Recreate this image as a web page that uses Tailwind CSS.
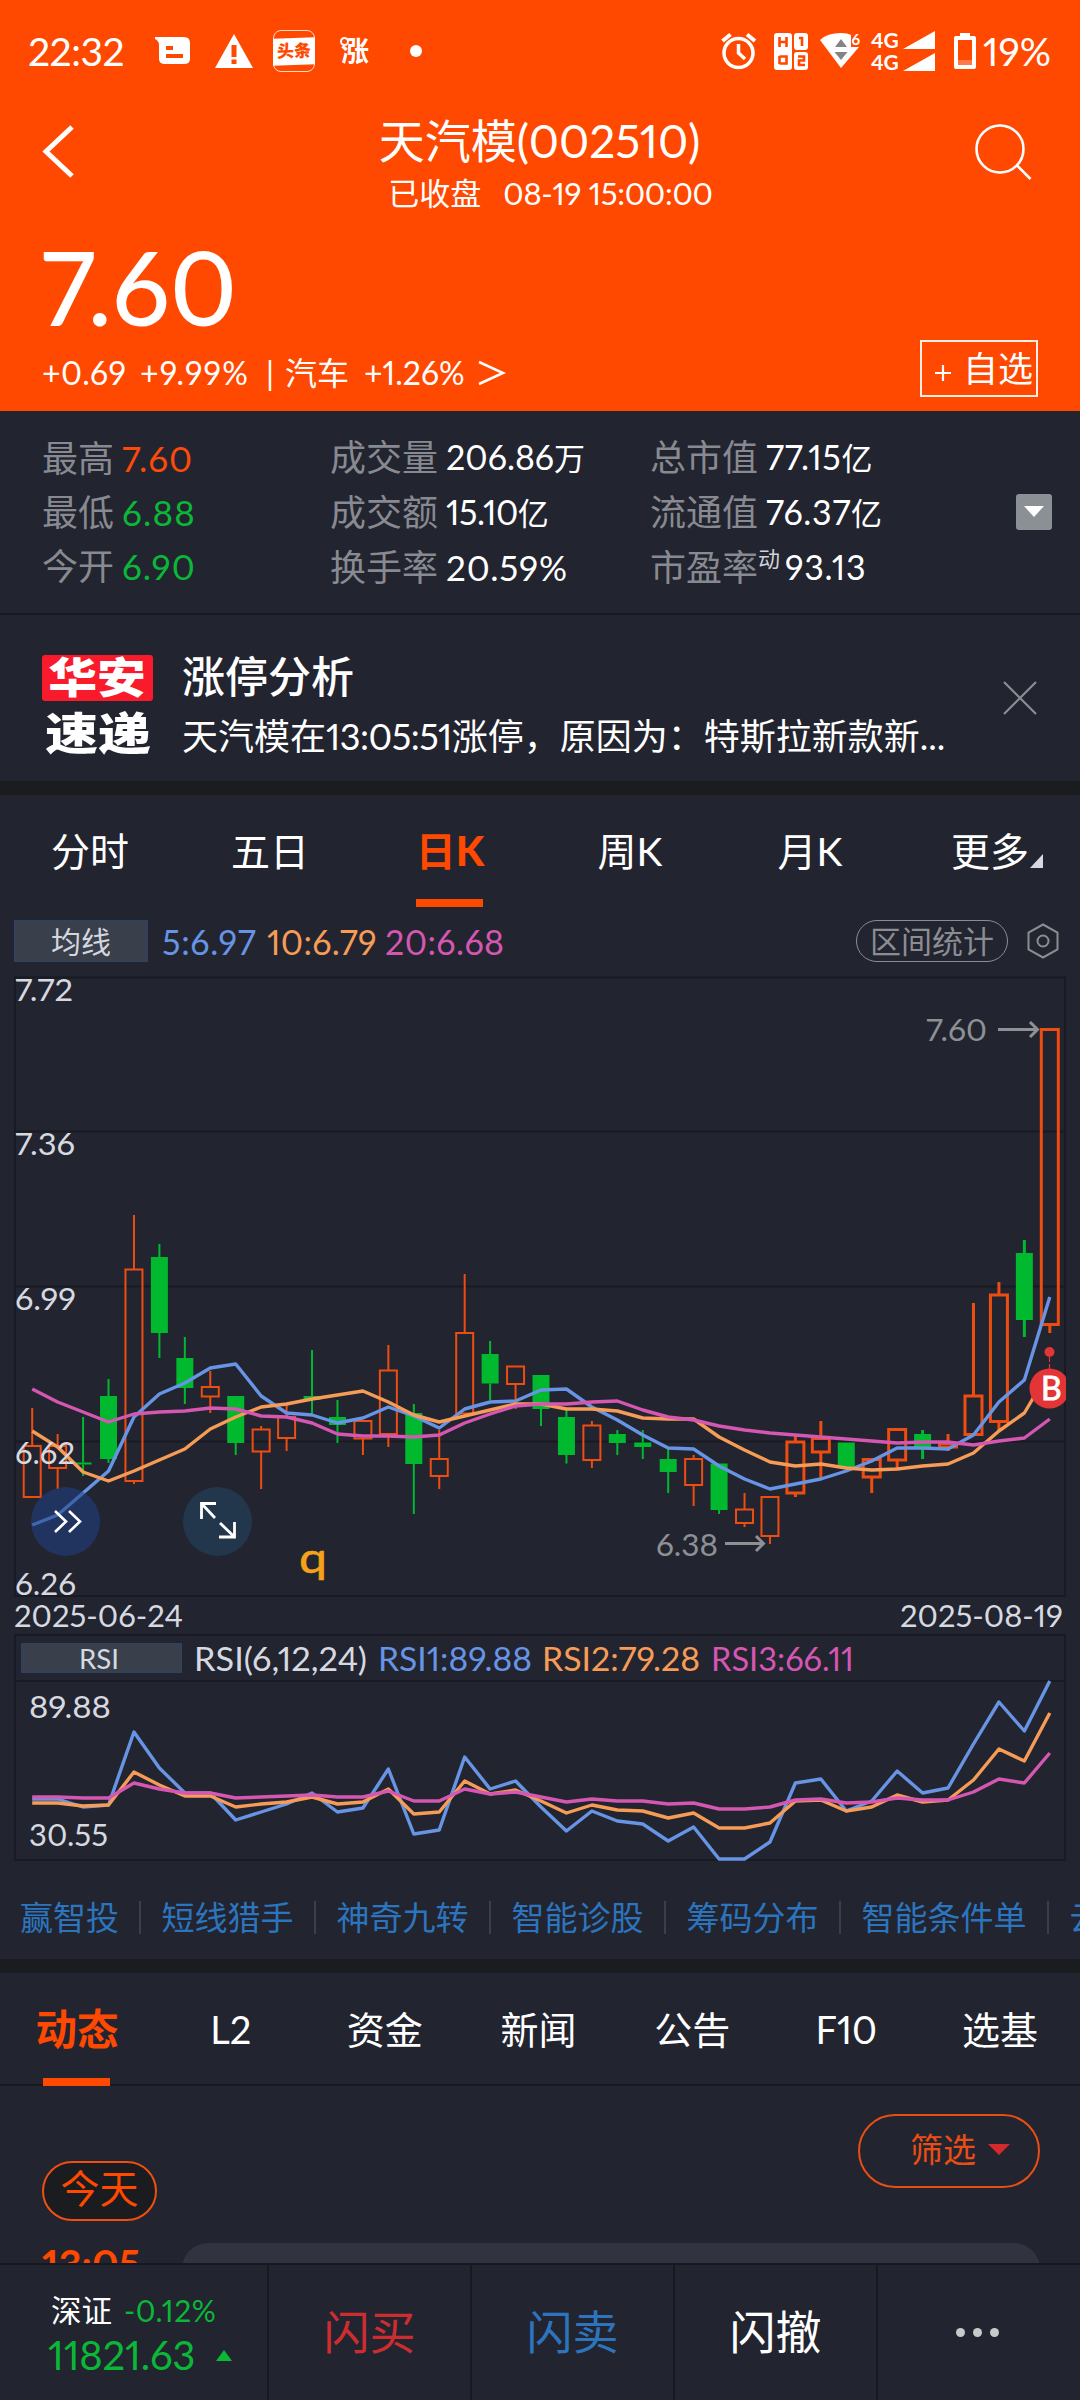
<!DOCTYPE html>
<html lang="zh-CN">

<head>
  <meta charset="UTF-8">
  <meta name="viewport" content="width=device-width, initial-scale=1.0">
  <title>天汽模(002510)</title>
  <script src="https://cdn.jsdelivr.net/npm/@tailwindcss/browser@4"></script>
</head>

<body class="w-[1080px] h-[2400px] overflow-hidden flex flex-col bg-[#22242f] text-white font-['Lato','Noto_Sans_CJK_SC',sans-serif] proportional-nums whitespace-nowrap">

  <!-- Header -->
  <header class="h-[411px] shrink-0 bg-[#ff4800] flex flex-col">
    <!-- Status bar -->
    <div class="h-[102px] shrink-0 flex items-center justify-between pl-[28px] pr-[29px]">
      <div class="flex items-center h-full">
        <span class="w-[127px] text-[39px] leading-none tracking-[-0.5px]">22:32</span>
        <svg class="w-[36px] h-[30px]" viewBox="0 0 36 30">
          <path fill="#fff" fill-rule="evenodd" d="M0 1H29Q35 1 35 7V23Q35 28 29 28H10Q4 28 4 23V8Q3 4 0 3ZM11 10V14H18V10ZM11 18V22H28V18Z" />
        </svg>
        <svg class="w-[38px] h-[34px] ml-[24px]" viewBox="0 0 38 34">
          <path fill="#fff" fill-rule="evenodd" d="M19 0 38 34H0ZM16.500 11V23H21.500V11ZM16.500 25.500V30H21.500V25.500Z" />
        </svg>
        <div class="w-[42px] h-[42px] ml-[20px] border border-white/80 rounded-lg flex items-center justify-center">
          <div class="w-[42px] h-[27px] shrink-0 bg-white text-[#ff4800] text-[17px] font-black leading-[25px] text-center -skew-y-2">头条</div>
        </div>
        <div class="relative w-[30px] h-[42px] ml-[26px] flex items-center">
          <span class="text-[28px] font-bold leading-none">涨</span>
          <span class="absolute left-[-1px] top-[7px] w-[9px] h-[9px] rounded-full bg-[#ff4800] border-2 border-white"></span>
        </div>
        <span class="w-[12px] h-[12px] ml-[39px] rounded-full bg-white"></span>
      </div>
      <div class="flex items-center h-full">
        <svg class="w-[36px] h-[38px]" viewBox="0 0 36 38" fill="none" stroke="#fff" stroke-width="3.500">
          <circle cx="17.500" cy="21" r="14.500" />
          <path d="M17.500 12V21L24 27" />
          <path d="M1.500 9 9.500 2.500M34 9 26 2.500" stroke-width="4" />
        </svg>
        <svg class="w-[37px] h-[38px] ml-[16px]" viewBox="0 0 37 38">
          <rect x="1" y="1" width="18" height="37" rx="3" fill="#fff" />
          <rect x="21" y="1" width="14" height="17" rx="3" fill="#fff" />
          <rect x="21" y="20" width="14" height="18" rx="3" fill="#fff" />
          <path fill="none" stroke="#ff4800" stroke-width="2.600" d="M6.500 5V15M13.500 5V15M6.500 10H13.500M6.500 24V32M6.500 24.500H13.500V31.500H6.500M26 6H29V14M25 24.500H31V28.500H26V33H32" />
        </svg>
        <svg class="w-[42px] h-[38px] ml-[10px]" viewBox="0 0 42 38">
          <path fill="#fff" d="M0 8Q7 1 21 1Q28 1 31 3V15H39L21 36Z" />
          <path fill="#848484" d="M21 7 27 15H15ZM14.500 20H27.500L21 28Z" />
          <text x="31.500" y="13" font-size="15" font-weight="700" fill="#fff">6</text>
        </svg>
        <div class="w-[30px] ml-[9px] flex flex-col gap-[2px] text-[21px] font-bold leading-[20px]">
          <span>4G</span>
          <span>4G</span>
        </div>
        <svg class="w-[33px] h-[42px] ml-[2px]" viewBox="0 0 33 42">
          <path fill="#fff" d="M32 1V19H0ZM32 23V41H0Z" />
        </svg>
        <svg class="w-[22px] h-[38px] ml-[18px]" viewBox="0 0 22 38">
          <path fill="#fff" fill-rule="evenodd" d="M6 1H16V4H20Q22 4 22 6V35Q22 37 20 37H2Q0 37 0 35V6Q0 4 2 4H6ZM4 8V33H18V8Z" />
          <rect x="4" y="28" width="14" height="5" fill="#ff7a48" />
        </svg>
        <span class="w-[68px] ml-[7px] text-[39px] leading-none">19%</span>
      </div>
    </div>

    <!-- Title -->
    <div class="h-[118px] shrink-0 flex pl-[42px] pr-[48px]">
      <svg class="w-[34px] h-[56px] mt-[21px]" viewBox="0 0 34 56">
        <path d="M30 4 4 28.500 30 53" fill="none" stroke="#fff" stroke-width="5" />
      </svg>
      <div class="flex-1 flex flex-col items-center pl-[29px]">
        <h1 class="h-[66px] mt-[6px] text-[46px] leading-[66px]">天汽模(002510)</h1>
        <p class="h-[36px] ml-[22px] mt-px text-[31px] leading-[36px] flex gap-[22px]"><span>已收盘</span><span class="tracking-[-0.3px]">08-19 15:00:00</span></p>
      </div>
      <svg class="w-[58px] h-[58px] mt-[22px]" viewBox="0 0 58 58" fill="none" stroke="#fff" stroke-width="2.600">
        <circle cx="26" cy="25" r="23.500" />
        <path d="M42.500 41 56.500 55" />
      </svg>
    </div>

    <!-- Price -->
    <div class="h-[116px] shrink-0 pl-[41px] text-[102px] leading-[133px] font-medium">7.60</div>
    <div class="flex justify-between pl-[42px] pr-[42px]">
      <div class="h-[73px] flex items-center text-[32px] leading-[70px]">
        <span class="w-[98px] tracking-[0.4px]">+0.69</span>
        <span class="w-[126px] tracking-[1.2px]">+9.99%</span>
        <span class="w-[19px]">|</span>
        <span class="w-[79px]">汽车</span>
        <span class="w-[114px]">+1.26%</span>
        <svg class="w-[28px] h-[26px]" viewBox="0 0 28 26">
          <path d="M1 2 25 13 1 24" fill="none" stroke="#fff" stroke-width="2.500" />
        </svg>
      </div>
      <div class="w-[118px] h-[57px] mt-[4px] border-2 border-white/90 flex items-center pl-[13px] gap-[12px]">
        <svg class="w-[16px] h-[16px] mt-[8px]" viewBox="0 0 16 16">
          <path d="M8 0V16M0 8H16" stroke="#fff" stroke-width="2.200" />
        </svg>
        <span class="text-[35px] leading-none">自选</span>
      </div>
    </div>
  </header>

  <!-- Quote summary -->
  <section class="h-[204px] shrink-0 border-b-2 border-[#171820] flex items-center pl-[42px] pr-[28px] text-[36px] leading-[54px]">
    <div class="w-[288px]">
      <p class="flex gap-[8px]"><span class="text-[#888a91]">最高</span><span class="text-[35px] tracking-[1px] text-[#fb4a09]">7.60</span></p>
      <p class="flex gap-[8px]"><span class="text-[#888a91]">最低</span><span class="text-[35px] tracking-[1.2px] text-[#0bb737]">6.88</span></p>
      <p class="flex gap-[8px]"><span class="text-[#888a91]">今开</span><span class="text-[35px] tracking-[1px] text-[#0bb737]">6.90</span></p>
    </div>
    <div class="w-[320px]">
      <p class="flex gap-[8px]"><span class="text-[#888a91]">成交量</span><span class="text-[34px]">206.86<span class="text-[31px]">万</span></span></p>
      <p class="flex gap-[8px]"><span class="text-[#888a91]">成交额</span><span class="text-[34px] tracking-[-0.5px]">15.10<span class="text-[31px]">亿</span></span></p>
      <p class="flex gap-[8px]"><span class="text-[#888a91]">换手率</span><span class="text-[35px] tracking-[0.8px]">20.59%</span></p>
    </div>
    <div class="flex-1">
      <p class="flex gap-[8px]"><span class="text-[#888a91]">总市值</span><span class="text-[34px] tracking-[0.7px]">77.15<span class="text-[31px]">亿</span></span></p>
      <p class="flex gap-[8px]"><span class="text-[#888a91]">流通值</span><span class="text-[34px] tracking-[0.7px]">76.37<span class="text-[31px]">亿</span></span></p>
      <p class="flex"><span class="text-[#888a91]">市盈率</span><span class="w-[27px] text-[22px] leading-[38px] text-[#d0d2d8]">动</span><span class="text-[34px] tracking-[0.7px]">93.13</span></p>
    </div>
    <div class="w-[36px] h-[36px] rounded-[3px] bg-[#8b9095] flex items-center justify-center">
      <svg class="w-[20px] h-[12px]" viewBox="0 0 20 12">
        <path d="M0 0H20L10 11Z" fill="#fff" />
      </svg>
    </div>
  </section>

  <!-- News -->
  <section class="h-[180px] shrink-0 border-b-[14px] border-[#1b1c1f] box-border flex">
    <div class="w-[111px] ml-[42px] mt-[40px] text-[42px] font-black flex flex-col">
      <div class="h-[46px] rounded-[3px] bg-[#f91a2c] leading-[45px] flex justify-center"><span class="scale-x-[1.16]">华安</span></div>
      <div class="h-[46px] mt-[10px] leading-[44px] flex justify-center text-[44px]"><span class="scale-x-[1.2]">速递</span></div>
    </div>
    <div class="ml-[29px] mt-[32px] flex-1">
      <h2 class="text-[43px] leading-[60px] font-medium">涨停分析</h2>
      <p class="text-[36px] leading-[58px]">天汽模在<span class="tracking-[-0.5px]">13:05:51</span>涨停，原因为：特斯拉新款新...</p>
    </div>
    <svg class="w-[34px] h-[34px] mr-[43px] mt-[66px]" viewBox="0 0 34 34">
      <path d="M1 1 33 33M33 1 1 33" stroke="#8b8d93" stroke-width="2.200" />
    </svg>
  </section>

  <!-- Chart tabs -->
  <nav class="h-[112px] shrink-0 grid grid-cols-6 text-[39px] leading-[112px] text-center">
    <a>分时</a>
    <a>五日</a>
    <a class="relative text-[40px] font-bold text-[#ff4800]">日<span class="font-black text-[41px]">K</span><span class="absolute bottom-0 left-[56px] w-[67px] h-[8px] bg-[#ff4800]"></span></a>
    <a>周K</a>
    <a>月K</a>
    <a class="flex items-center justify-center">更多<svg class="w-[13px] h-[14px] mt-[20px] ml-[1px] mr-[-14px]" viewBox="0 0 13 14"><path d="M13 0V14H0Z" fill="#d5d8e0" /></svg></a>
  </nav>

  <!-- Moving average legend -->
  <div class="h-[63px] shrink-0 flex items-center pl-[14px] pr-[21px] pt-[5px]">
    <span class="w-[134px] h-[42px] border border-[#2d4266] bg-[#39404c] text-[#d3d6de] text-[30px] leading-[40px] text-center">均线</span>
    <span class="w-[105px] ml-[14px] text-[34px] tracking-[0.7px] text-[#6794e4]">5:6.97</span>
    <span class="w-[118px] text-[34px] tracking-[0.3px] text-[#f79c56]">10:6.79</span>
    <span class="flex-1 text-[34px] tracking-[0.4px] text-[#d457b2]">20:6.68</span>
    <span class="w-[152px] h-[42px] border border-[#8b8d93] rounded-full text-[#8b8d93] text-[31px] leading-[40px] text-center">区间统计</span>
    <svg class="w-[32px] h-[36px] ml-[19px]" viewBox="0 0 32 36" fill="none" stroke="#8b8d93" stroke-width="2">
      <path d="M16 1.500 30.500 9.500V26.500L16 34.500 1.500 26.500V9.500Z" />
      <circle cx="16" cy="18" r="5.500" />
    </svg>
  </div>

  <!-- K line + RSI -->
  <svg class="w-[1080px] h-[900px] shrink-0" viewBox="0 970 1080 900">
    <g fill="none" stroke="#191a23" stroke-width="2">
      <path d="M15 977.500H1065V1596H15ZM15 1131.500H1065M15 1286.500H1065M15 1441.500H1065" />
      <path d="M15 1635H1065V1860H15ZM15 1681H1065" />
    </g>

    <g id="candles"></g>
    <g id="lines" fill="none" stroke-width="3.400" stroke-linejoin="round"></g>

    <g font-size="31" fill="#d6d9e0">
      <text x="15" y="1001" textLength="58" lengthAdjust="spacingAndGlyphs">7.72</text>
      <text x="15" y="1155" textLength="60" lengthAdjust="spacingAndGlyphs">7.36</text>
      <text x="15" y="1310" textLength="61" lengthAdjust="spacingAndGlyphs">6.99</text>
      <text x="15" y="1464" textLength="60" lengthAdjust="spacingAndGlyphs">6.62</text>
      <text x="15" y="1595" textLength="61" lengthAdjust="spacingAndGlyphs">6.26</text>
      <text x="14" y="1627" textLength="169" lengthAdjust="spacingAndGlyphs">2025-06-24</text>
      <text x="900" y="1627" textLength="163" lengthAdjust="spacingAndGlyphs">2025-08-19</text>
      <text x="29" y="1718" textLength="82" lengthAdjust="spacingAndGlyphs">89.88</text>
      <text x="29" y="1846" textLength="79" lengthAdjust="spacingAndGlyphs">30.55</text>
    </g>

    <!-- high / low marks -->
    <g font-size="31" fill="#8d9094">
      <text x="926" y="1041" textLength="61" lengthAdjust="spacingAndGlyphs">7.60</text>
      <text x="656" y="1556" textLength="62" lengthAdjust="spacingAndGlyphs">6.38</text>
      <path d="M998 1029.500H1037M1030 1022 1037.500 1029.500 1030 1037M725 1543.500H763M756 1536 763.500 1543.500 756 1551" fill="none" stroke="#8d9094" stroke-width="3" />
    </g>

    <!-- B point -->
    <svg x="0" y="970" width="1066" height="900" viewBox="0 970 1066 900">
      <circle cx="1049.500" cy="1352" r="5" fill="#e33436" />
      <path d="M1049.500 1357V1370" stroke="#e33436" stroke-width="1.200" stroke-dasharray="5 2" />
      <circle cx="1049.500" cy="1388.500" r="20" fill="#e33436" />
      <text x="1041" y="1400" font-size="32" fill="#fff" stroke="#fff" stroke-width="0.800">B</text>
    </svg>

    <!-- floating buttons -->
    <circle cx="65.500" cy="1521.500" r="34.500" fill="#203f86" fill-opacity="0.550" />
    <path d="M55 1511 66 1521.500 55 1532M69 1511 80 1521.500 69 1532" fill="none" stroke="#fff" stroke-width="2.600" />
    <circle cx="217.500" cy="1521.500" r="34.500" fill="#22364c" />
    <path d="M201.500 1519V1503.500H216M201.500 1503.500 215 1518M220 1523 234.500 1537M219 1537H234.500V1522" fill="none" stroke="#fff" stroke-width="2.800" />
    <text x="299" y="1573" font-size="43" textLength="28" lengthAdjust="spacingAndGlyphs" fill="#f5a11b" stroke="#f5a11b" stroke-width="0.600">q</text>

    <!-- RSI legend -->
    <rect x="21.500" y="1643.500" width="160" height="29" fill="#39404c" stroke="#2d4266" />
    <text x="79" y="1669" font-size="27" fill="#d6d9e0" textLength="40" lengthAdjust="spacingAndGlyphs">RSI</text>
    <g font-size="32">
      <text x="194" y="1671" fill="#d6d9e0" textLength="173" lengthAdjust="spacingAndGlyphs">RSI(6,12,24)</text>
      <text x="378" y="1671" fill="#6794e4" textLength="154" lengthAdjust="spacingAndGlyphs">RSI1:89.88</text>
      <text x="542" y="1671" fill="#f79c56" textLength="158" lengthAdjust="spacingAndGlyphs">RSI2:79.28</text>
      <text x="711" y="1671" fill="#d457b2" textLength="143" lengthAdjust="spacingAndGlyphs">RSI3:66.11</text>
    </g>
  </svg>

  <!-- Tool links -->
  <div class="h-[89px] shrink-0 flex items-center pl-[20px] pt-[5px] text-[33px] leading-none text-[#2c75be]">
    <a class="mr-[20px]">赢智投</a><i class="w-[2px] h-[33px] bg-[#3c3f49] shrink-0"></i>
    <a class="mx-[20.500px]">短线猎手</a><i class="w-[2px] h-[33px] bg-[#3c3f49] shrink-0"></i>
    <a class="mx-[20.500px]">神奇九转</a><i class="w-[2px] h-[33px] bg-[#3c3f49] shrink-0"></i>
    <a class="mx-[20.500px]">智能诊股</a><i class="w-[2px] h-[33px] bg-[#3c3f49] shrink-0"></i>
    <a class="mx-[20.500px]">筹码分布</a><i class="w-[2px] h-[33px] bg-[#3c3f49] shrink-0"></i>
    <a class="mx-[20.500px]">智能条件单</a><i class="w-[2px] h-[33px] bg-[#3c3f49] shrink-0"></i>
    <a class="mx-[20.500px]">云</a>
  </div>
  <div class="h-[14px] shrink-0 bg-[#1b1c1f]"></div>

  <!-- Info tabs -->
  <nav class="h-[113px] shrink-0 grid grid-cols-7 border-b-2 border-[#171820] pr-[3px] text-[38px] leading-[113px] text-center">
    <a class="relative text-[41.500px] font-bold text-[#ff4800]">动态<span class="absolute bottom-0 left-[43px] w-[67px] h-[8px] bg-[#ff4800]"></span></a>
    <a>L2</a>
    <a>资金</a>
    <a>新闻</a>
    <a>公告</a>
    <a>F10</a>
    <a>选基</a>
  </nav>

  <!-- Feed -->
  <section class="h-[177px] shrink-0 overflow-hidden flex justify-between pl-[42px] pr-[40px]">
    <div class="pt-[75px]">
      <div class="w-[115px] h-[60px] rounded-full border-2 border-[#f04f12] bg-[#1b1c1f] text-[#ff4800] text-[39px] leading-[51px] text-center">今天</div>
      <div class="mt-[18px] text-[40px] leading-[50px] font-bold text-[#ff4800]">13:05</div>
    </div>
    <div class="w-[858px] flex flex-col items-end pt-[28px]">
      <div class="w-[182px] h-[74px] shrink-0 rounded-full border-2 border-[#e94e15] text-[#e94e15] text-[33px] leading-[66px] flex pl-[50px]">
        筛选<svg class="w-[22px] h-[11px] ml-[12px] mt-[28px]" viewBox="0 0 22 11"><path d="M0 0H22L11 11Z" fill="#d42a2c" /></svg>
      </div>
      <div class="w-full h-[120px] mt-[55px] shrink-0 rounded-[26px] bg-[#313340]"></div>
    </div>
  </section>

  <!-- Bottom bar -->
  <footer class="flex-1 border-t-2 border-[#171820] flex text-[46px]">
    <div class="w-[269px] border-r-2 border-[#171820] pl-[51px] pt-[23px]">
      <p class="flex items-center gap-[12px] leading-[44px] text-[30.500px]"><span>深证</span><span class="text-[30px] tracking-[0.500px] text-[#0bb737]">-0.12%</span></p>
      <p class="flex items-center leading-[46px] text-[40px] text-[#0bb737]"><span class="w-[168px] ml-[-3px] tracking-[-0.2px]">11821.63</span><svg class="w-[16px] h-[11px]" viewBox="0 0 16 11"><path d="M8 0 16 11H0Z" fill="#0bb737" /></svg></p>
    </div>
    <a class="w-[203px] border-r-2 border-[#171820] leading-[134px] text-center text-[#cc2d31]">闪买</a>
    <a class="w-[203px] border-r-2 border-[#171820] leading-[134px] text-center text-[#2c75be]">闪卖</a>
    <a class="w-[203px] border-r-2 border-[#171820] leading-[134px] text-center">闪撤</a>
    <div class="flex-1 flex items-center justify-center gap-[8px] pr-[4px]">
      <i class="w-[9px] h-[9px] rounded-full bg-[#c9c9cb]"></i>
      <i class="w-[9px] h-[9px] rounded-full bg-[#c9c9cb]"></i>
      <i class="w-[9px] h-[9px] rounded-full bg-[#c9c9cb]"></i>
    </div>
  </footer>

  <script>
    const X0 = 32.2;
    const STEP = 25.44;
    const UP = '#ee4d12';
    const DOWN = '#00b92f';

    // [up, high, body top, body bottom, low]
    const candles = [
      [1, 1408, 1446, 1497, 1497], [1, 1434, 1446, 1468, 1489], [0, 1417, 1462.5, 1464.5, 1476], [0, 1379, 1396, 1459, 1463],
      [1, 1215, 1269.5, 1481, 1484], [0, 1244, 1257, 1333, 1358], [0, 1337, 1358, 1388, 1404], [1, 1371, 1387, 1396.5, 1413],
      [0, 1396, 1396, 1443, 1455], [1, 1426, 1429.5, 1451.5, 1489], [1, 1404, 1417, 1438, 1451], [0, 1350, 1396, 1400, 1414],
      [0, 1400, 1417, 1425, 1443], [1, 1421, 1421, 1438.5, 1455], [1, 1345, 1370.5, 1434, 1447], [0, 1404, 1413, 1464, 1514],
      [1, 1430, 1459, 1476, 1489], [1, 1274, 1333, 1413.5, 1414], [0, 1341, 1354, 1383.5, 1400], [1, 1366, 1366.5, 1384, 1409],
      [0, 1375, 1375, 1409, 1426], [0, 1408, 1417, 1455, 1463.5], [1, 1421, 1425.5, 1460, 1468], [0, 1430, 1434, 1443, 1455],
      [0, 1430, 1442.5, 1447, 1459], [0, 1448, 1459, 1472, 1493], [1, 1455, 1459, 1485, 1506], [0, 1463.5, 1463.5, 1510, 1514],
      [1, 1493, 1509.5, 1523, 1527], [1, 1497, 1497, 1536, 1544], [1, 1436, 1442, 1493, 1497], [1, 1421, 1438.5, 1452, 1480],
      [0, 1442.5, 1442.5, 1467, 1467], [1, 1459, 1459.5, 1477, 1493], [1, 1429, 1429.5, 1460, 1468], [0, 1430, 1434, 1447, 1459],
      [1, 1434, 1443.5, 1447, 1451], [1, 1303, 1396, 1434.5, 1435], [1, 1282, 1295, 1421.5, 1431], [0, 1240, 1253, 1320, 1337],
      [1, 1029.5, 1029.5, 1324.5, 1333],
    ];

    document.getElementById('candles').innerHTML = candles.map(([up, high, top, bottom, low], i) => {
      const x = X0 + STEP * i;
      const sw = i >= 30 ? 3 : 2;
      const wick = `<path d="M${x} ${high}V${top}M${x} ${bottom}V${low}" stroke="${up ? UP : DOWN}" stroke-width="${sw}" />`;
      const body = up
        ? `<rect x="${x - 8.5}" y="${top}" width="17" height="${bottom - top}" fill="none" stroke="${UP}" stroke-width="${sw}" />`
        : `<rect x="${x - 8.5}" y="${top}" width="17" height="${bottom - top}" fill="${DOWN}" />`;
      return wick + body;
    }).join('');

    const lines = [
      // MA5, MA10, MA20
      ['#6794e4', [1525, 1515, 1493, 1471, 1417, 1394, 1383, 1368, 1364, 1396, 1413, 1415, 1423, 1418, 1407, 1416, 1428, 1409, 1402, 1401, 1390, 1389, 1407, 1420, 1435, 1448, 1449, 1466, 1479, 1489, 1484, 1479, 1471, 1461, 1448, 1448, 1449, 1435, 1402, 1380, 1297]],
      ['#f79c56', [1431, 1447, 1472, 1481, 1471, 1460, 1449, 1429, 1417, 1407, 1404, 1399, 1395, 1391, 1402, 1415, 1422, 1416, 1410, 1404, 1404, 1409, 1409, 1411, 1418, 1419, 1419, 1437, 1450, 1462, 1466, 1464, 1468, 1470, 1469, 1466, 1464, 1453, 1431, 1413, 1370]],
      ['#d457b2', [1389, 1402, 1412, 1422, 1414, 1412, 1411, 1408, 1409, 1416, 1417, 1423, 1434, 1436, 1436, 1437, 1435, 1423, 1414, 1406, 1404, 1404, 1402, 1401, 1410, 1417, 1420, 1426, 1430, 1433, 1435, 1437, 1439, 1441, 1443, 1442, 1442, 1445, 1441, 1438, 1419]],
      // RSI1, RSI2, RSI3
      ['#6794e4', [1799, 1799, 1807, 1805, 1732, 1768, 1793, 1793, 1820, 1812, 1804, 1793, 1812, 1808, 1769, 1834, 1830, 1757, 1789, 1781, 1807, 1831, 1811, 1821, 1824, 1841, 1827, 1859, 1859, 1842, 1783, 1779, 1811, 1801, 1771, 1793, 1788, 1744, 1702, 1731, 1681]],
      ['#f79c56', [1803, 1803, 1806, 1805, 1772, 1785, 1796, 1796, 1807, 1804, 1802, 1797, 1804, 1802, 1789, 1814, 1812, 1781, 1794, 1790, 1801, 1813, 1805, 1810, 1811, 1818, 1813, 1828, 1828, 1823, 1801, 1800, 1811, 1807, 1795, 1802, 1800, 1780, 1749, 1761, 1713]],
      ['#d457b2', [1797, 1797, 1798, 1798, 1783, 1789, 1793, 1793, 1798, 1797, 1796, 1795, 1797, 1797, 1791, 1801, 1801, 1789, 1794, 1792, 1797, 1802, 1799, 1801, 1801, 1804, 1803, 1809, 1809, 1807, 1800, 1799, 1803, 1802, 1798, 1800, 1800, 1792, 1779, 1783, 1753]],
    ];

    document.getElementById('lines').innerHTML = lines.map(([color, ys]) =>
      `<polyline stroke="${color}" points="${ys.map((y, i) => `${X0 + STEP * i},${y}`).join(' ')}" />`
    ).join('');
  </script>
</body>

</html>
